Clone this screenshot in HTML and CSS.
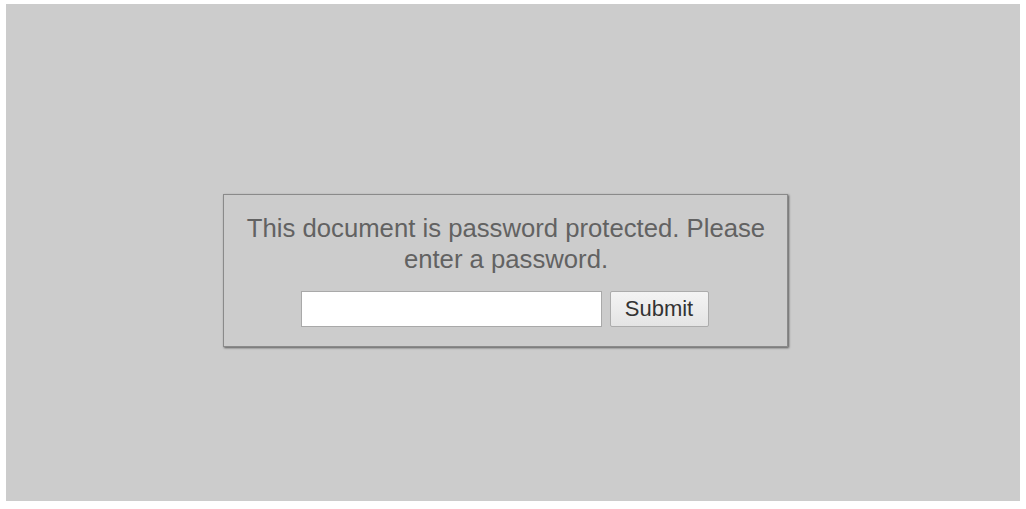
FILE: index.html
```html
<!DOCTYPE html>
<html>
<head>
<meta charset="utf-8">
<link rel="stylesheet" href="styles.css">
</head>
<body>
<div class="stage">
  <form class="dialog">
    <p class="message">This document is password protected. Please enter a password.</p>
    <div class="row">
      <input class="pw" type="password">
      <button class="submit" type="button">Submit</button>
    </div>
  </form>
</div>
</body>
</html>
```
FILE: styles.css
```css
html, body { background: #ffffff; }
body {
  margin: 4px 6px 8px 6px;
  font-family: "Liberation Sans", Arial, sans-serif;
}
.stage {
  background: #cccccc;
  height: 497px;
  padding: 190px 0 0 217px;
  box-sizing: border-box;
  display: flex;
  align-items: flex-start;
}
.dialog {
  width: 565px;
  height: 153px;
  box-sizing: border-box;
  border: 1px solid #8a8a8a;
  box-shadow: 1px 1px 2px #5a5a5a;
  padding: 18px 11px 0 9px;
  display: flex;
  flex-direction: column;
  align-items: center;
}
.message {
  margin: 0 0 0 3px;
  width: 530px;
  font-size: 25.7px;
  line-height: 31px;
  color: #626262;
  text-align: center;
}
.row {
  margin-top: 16px;
  display: flex;
  gap: 8px;
  align-items: center;
}
.pw {
  width: 301px;
  height: 36px;
  box-sizing: border-box;
  border: 1px solid #a9a9a9;
  background: #fff;
  padding: 0 4px;
  margin: 0;
}
.submit {
  width: 99px;
  height: 36px;
  box-sizing: border-box;
  margin: 0;
  border: 1px solid #acacac;
  border-radius: 2px;
  background: linear-gradient(#f4f4f4, #e4e4e4);
  font-family: "Liberation Sans", Arial, sans-serif;
  font-size: 22px;
  color: #333;
  padding: 0;
}
```
